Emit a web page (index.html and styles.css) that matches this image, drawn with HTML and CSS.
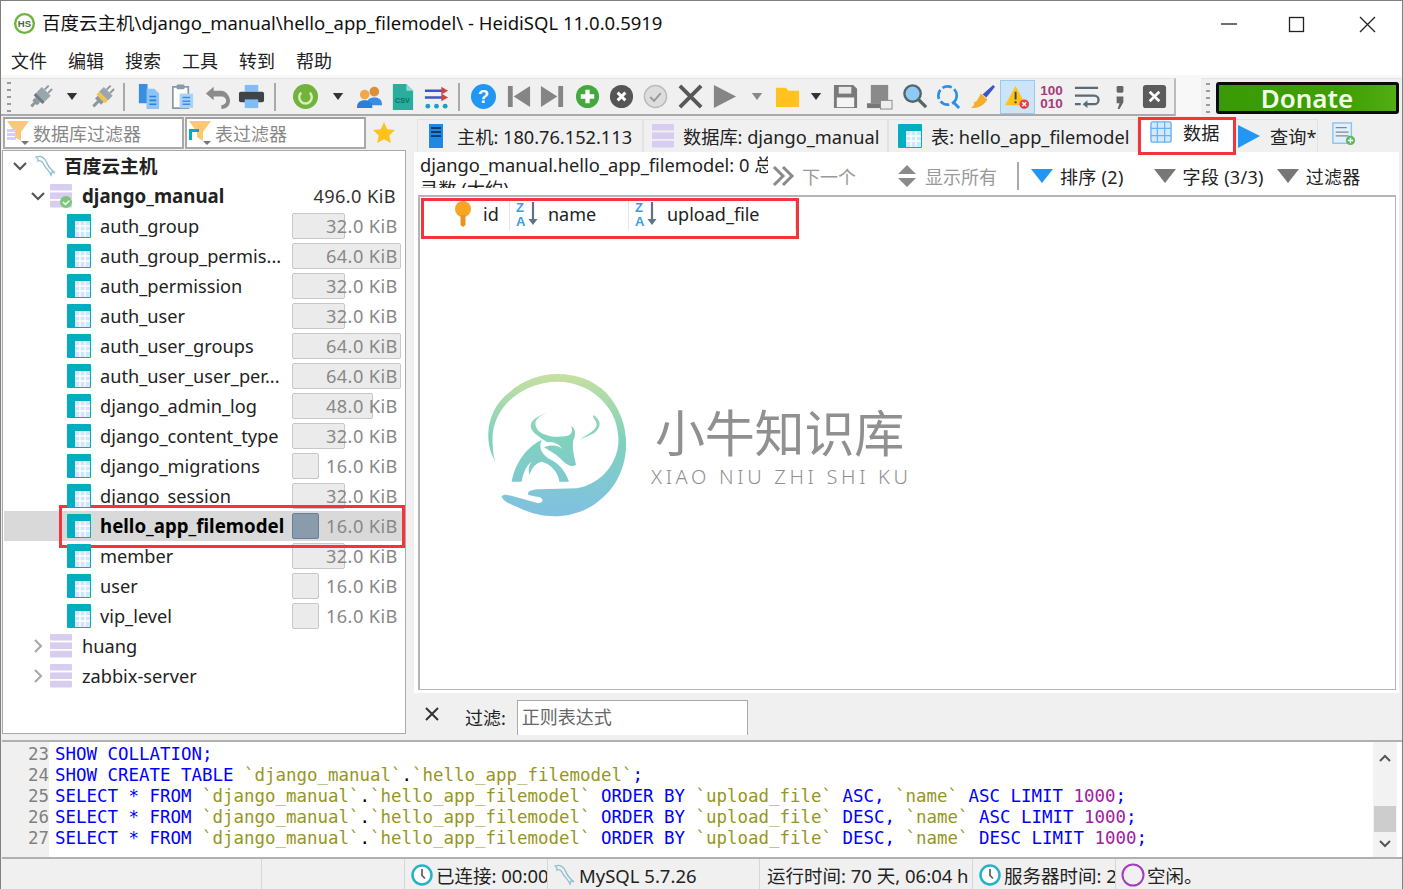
FILE: index.html
```html
<!DOCTYPE html>
<html lang="zh">
<head>
<meta charset="utf-8">
<title>HeidiSQL</title>
<link rel="stylesheet" href="styles.css">
</head>
<body>
<svg class="sprite" width="0" height="0">
  <defs>
    <symbol id="tbl" viewBox="0 0 24 24"><rect width="24" height="24" rx="1" fill="#00aebf"/><rect x="8" y="7" width="15" height="16" fill="#cfe6fb"/><path d="M13 7v16M18 7v16M8 12h15M8 17h15" stroke="#fff" stroke-width="1.3"/></symbol>
    <symbol id="db" viewBox="0 0 22 24"><rect width="22" height="6.6" rx="1" fill="#d8cdee"/><rect y="8.4" width="22" height="6.6" fill="#d8cdee"/><rect y="16.8" width="22" height="6.6" rx="1" fill="#d8cdee"/></symbol>
    <symbol id="sort" viewBox="0 0 24 26"><text x="0" y="11" class="az">Z</text><text x="0" y="25" class="az">A</text><path d="M17 1v20" stroke="#5f7488" stroke-width="2.200"/><path d="M12.500 18h9l-4.500 6z" fill="#5f7488"/></symbol>
    <symbol id="dolphin" viewBox="0 0 24 24"><path d="M2 3c5-2 9 1 11 6 1 4 4 6 8 10l-3-1-1 3c-2-5-5-6-7-10C8 7 6 6 4 7 5 5 3 4 2 3z" fill="none" stroke="#8fbfd0" stroke-width="1.300"/></symbol>
    <symbol id="clock" viewBox="0 0 24 24"><circle cx="12" cy="12" r="9.500" fill="#fff" stroke="#28b2c6" stroke-width="2.500"/><path d="M12 6v6.500l3 3" fill="none" stroke="#555" stroke-width="1.600"/></symbol>
    <symbol id="funnel" viewBox="0 0 24 26"><path d="M1 1h22l-8 11v9l-6-4v-5z" fill="#fbc778"/></symbol>
    <symbol id="caret" viewBox="0 0 14 8"><path d="M1 0h12l-6 8z"/></symbol>
    <symbol id="plug" viewBox="0 0 28 28"><g transform="rotate(45 14 14)"><path d="M11 0h2v6h-2zM16 0h2v6h-2z" fill="#8c979e"/><path d="M8 6h13v7a6 6 0 0 1-13 0z" fill="#9aa6ad"/><rect x="8" y="15" width="13" height="3" fill="#6e7b83"/><path d="M11 19h7v4h-2v5h-3v-5h-2z" fill="#8c979e"/></g></symbol>
  </defs>
</svg>

<div class="window">
  <header class="titlebar">
    <svg class="hs" viewBox="0 0 24 24"><circle cx="12" cy="12" r="11" fill="#6fb23c"/><circle cx="12" cy="12" r="8.500" fill="#fff"/><text x="12" y="15.500" class="hs-t">HS</text></svg>
    <span class="title">百度云主机\django_manual\hello_app_filemodel\ - HeidiSQL 11.0.0.5919</span>
    <div class="winctl">
      <svg viewBox="0 0 69 44"><path d="M26 23h16" stroke="#222" stroke-width="1.300"/></svg>
      <svg viewBox="0 0 69 44"><rect x="25.500" y="16.500" width="14" height="14" fill="none" stroke="#222" stroke-width="1.300"/></svg>
      <svg viewBox="0 0 69 44"><path d="M27 16l15 15M42 16L27 31" stroke="#222" stroke-width="1.300"/></svg>
    </div>
  </header>

  <nav class="menubar"><span>文件</span><span>编辑</span><span>搜索</span><span>工具</span><span>转到</span><span>帮助</span></nav>

  <div class="toolrow">
    <div class="toolbar">
      <i class="grip"></i>
      <span class="b"><svg viewBox="0 0 28 28"><use href="#plug"/></svg></span>
      <span class="c"><svg class="car" viewBox="0 0 14 8"><use href="#caret"/></svg></span>
      <span class="b n"><svg viewBox="0 0 28 28"><g transform="rotate(45 14 14)"><path d="M11 0h2v6h-2zM16 0h2v6h-2z" fill="#8c979e"/><path d="M8 6h13v7H8z" fill="#9aa6ad"/><rect x="8" y="13" width="13" height="4" fill="#f5c445"/><path d="M10 17h9v4h-3v7h-3v-7h-3z" fill="#8c979e"/></g></svg></span>
      <i class="sep"></i>
      <span class="b"><svg viewBox="0 0 28 28"><path d="M4 1h9v20H4z" fill="#3a8de0"/><path d="M12 6h8l5 5v16H12z" fill="#8cc4f5"/><path d="M15 14h7M15 18h7M15 22h7" stroke="#2f7fd0" stroke-width="1.600"/></svg></span>
      <span class="b"><svg viewBox="0 0 28 28"><path d="M4 4h16v22H4z" fill="#fff" stroke="#8a99a5" stroke-width="1.800"/><rect x="8" y="1.500" width="8" height="5" rx="1" fill="#8a99a5"/><path d="M11 11h14v15H11z" fill="#a9d2f7"/><path d="M14 15h8M14 19h8M14 22h8" stroke="#3a8de0" stroke-width="1.500"/></svg></span>
      <span class="b"><svg viewBox="0 0 28 28"><path d="M10 4L2 11l8 7v-4h8c3 0 5 2 5 4.500S21 23 18 23v4c6 0 9-4 9-8.500S23 8 18 8h-8z" fill="#8b8b8b"/></svg></span>
      <span class="b"><svg viewBox="0 0 28 28"><rect x="7" y="2" width="14" height="7" fill="#7fbdf2"/><rect x="1" y="9" width="26" height="11" rx="2" fill="#3e4449"/><rect x="7" y="17" width="14" height="9" fill="#7fbdf2"/></svg></span>
      <i class="sep wide"></i>
      <span class="b"><svg viewBox="0 0 28 28"><circle cx="14" cy="14" r="13" fill="#71b33c"/><path d="M9.500 10a6.500 6.500 0 1 0 9 0" fill="none" stroke="#d9efb9" stroke-width="2.500"/></svg></span>
      <span class="c w"><svg class="car" viewBox="0 0 14 8"><use href="#caret"/></svg></span>
      <span class="b n"><svg viewBox="0 0 28 28"><circle cx="19" cy="9" r="5" fill="#d9913a"/><path d="M11 23c0-6 3-8 8-8s8 2 8 8z" fill="#3a8de0"/><circle cx="9" cy="12" r="5" fill="#f0a94a"/><path d="M1 26c0-6 3-8 8-8s8 2 8 8z" fill="#2b7fd6"/></svg></span>
      <span class="b csvb"><svg viewBox="0 0 28 28"><path d="M4 1h14l7 7v20H4z" fill="#27ae9c"/><path d="M18 1l7 7h-7z" fill="#8edcd1"/><text x="14" y="21" class="csv">CSV</text></svg></span>
      <span class="b"><svg viewBox="0 0 28 28"><path d="M2 8h19M2 15h19" stroke="#3b57c4" stroke-width="2.500"/><path d="M19 4l7 4-7 4zM19 11l7 4-7 4z" fill="#d0453e"/><circle cx="5" cy="24" r="2.500" fill="#17a2c5"/><circle cx="14" cy="24" r="2.500" fill="#17a2c5"/><circle cx="23" cy="24" r="2.500" fill="#17a2c5"/></svg></span>
      <i class="sep tight"></i>
      <span class="b"><svg viewBox="0 0 28 28"><circle cx="14" cy="14" r="13" fill="#2196f3"/><text x="14" y="21" class="q">?</text></svg></span>
      <span class="b"><svg viewBox="0 0 28 28"><path d="M3 3h5v22H3zM26 3v22L9 14z" fill="#858585"/></svg></span>
      <span class="b"><svg viewBox="0 0 28 28"><path d="M25 3h-5v22h5zM2 3v22l17-11z" fill="#858585"/></svg></span>
      <span class="b"><svg viewBox="0 0 28 28"><circle cx="14" cy="14" r="12" fill="#43a93f"/><path d="M14 7v14M7 14h14" stroke="#fff" stroke-width="4.500"/></svg></span>
      <span class="b"><svg viewBox="0 0 28 28"><circle cx="14" cy="14" r="12" fill="#555"/><path d="M10 10l8 8M18 10l-8 8" stroke="#fff" stroke-width="3"/></svg></span>
      <span class="b"><svg viewBox="0 0 28 28"><circle cx="14" cy="14" r="11.500" fill="#ddd" stroke="#bbb" stroke-width="1.500"/><path d="M8.500 14.500l4 4 7-8" fill="none" stroke="#999" stroke-width="2"/></svg></span>
      <span class="b"><svg viewBox="0 0 28 28"><path d="M3 3l22 22M25 3L3 25" stroke="#585858" stroke-width="4"/></svg></span>
      <span class="b"><svg viewBox="0 0 28 28"><path d="M3 2l23 12L3 26z" fill="#858585"/></svg></span>
      <span class="c s m"><svg class="car g" viewBox="0 0 14 8"><use href="#caret"/></svg></span>
      <span class="b"><svg viewBox="0 0 28 28"><path d="M2 5h10l3 3h11v17H2z" fill="#ffc21e"/></svg></span>
      <span class="c s"><svg class="car" viewBox="0 0 14 8"><use href="#caret"/></svg></span>
      <span class="b"><svg viewBox="0 0 28 28"><path d="M2 2h20l4 4v20H2z" fill="#7a7a7a"/><rect x="7" y="4" width="13" height="7" fill="#e8e8e8"/><rect x="5" y="15" width="18" height="10" fill="#f4f4f4"/></svg></span>
      <span class="b"><svg viewBox="0 0 28 28"><path d="M5 2h18v19H5z" fill="#8a8a8a"/><path d="M1 21h18v5H1z" fill="#777"/><rect x="15" y="18" width="12" height="9" fill="#eee" stroke="#888"/></svg></span>
      <span class="b"><svg viewBox="0 0 28 28"><circle cx="12" cy="11" r="8.500" fill="#8fc9f7" stroke="#566" stroke-width="2.500"/><path d="M18 17l8 8" stroke="#566" stroke-width="3.500"/></svg></span>
      <span class="b"><svg viewBox="0 0 28 28"><circle cx="13" cy="13" r="9.500" fill="none" stroke="#2b8fe8" stroke-width="2.800" stroke-dasharray="10 3"/><path d="M19 20l6 6" stroke="#2b8fe8" stroke-width="3"/></svg></span>
      <span class="b"><svg viewBox="0 0 28 28"><path d="M25 2l2 2-9 11-4-3z" fill="#3b57c4"/><path d="M12 11l7 6c-3 6-9 9-17 9 3-2 4-4 3-6 3 0 5-4 7-9z" fill="#f6ad2b"/></svg></span>
      <span class="b on"><svg viewBox="0 0 28 28"><path d="M12 3l11 20H1z" fill="#ffc21e"/><path d="M12 9v8M12 19v2" stroke="#444" stroke-width="2"/><circle cx="21" cy="22" r="5" fill="#e8434a"/><path d="M19 20l4 4M23 20l-4 4" stroke="#fff" stroke-width="1.400"/></svg></span>
      <span class="b"><svg viewBox="0 0 28 28"><text x="14" y="12" class="bin">100</text><text x="14" y="26" class="bin">010</text></svg></span>
      <span class="b"><svg viewBox="0 0 28 28"><path d="M2 5h24M2 13h20a4 4 0 0 1 0 9H13M2 22h6" fill="none" stroke="#5a6a76" stroke-width="2.400"/><path d="M15 18l-5 4 5 4z" fill="#5a6a76"/></svg></span>
      <span class="b"><svg viewBox="0 0 28 28"><rect x="10" y="3" width="7" height="7" rx="1.500" fill="#666"/><path d="M10 14h7v6l-4 7h-2l2-6h-3z" fill="#666"/></svg></span>
      <span class="b"><svg viewBox="0 0 28 28"><rect x="2" y="2" width="24" height="24" rx="3" fill="#5b5b5b"/><path d="M9 9l10 10M19 9L9 19" stroke="#fff" stroke-width="2.800"/></svg></span>
    </div>
    <div class="donatebar">
      <i class="grip"></i>
      <div class="donate">Donate</div>
    </div>
  </div>

  <main class="main">
    <section class="left">
      <div class="filters">
        <div class="filter"><svg class="fi" viewBox="0 0 24 26"><use href="#funnel"/><rect x="1" y="9" width="9" height="3" fill="#d8cdee"/><rect x="1" y="13" width="9" height="3" fill="#d8cdee"/><rect x="1" y="17" width="9" height="3" fill="#d8cdee"/><path d="M15 21h8l-4 4z" fill="#777"/></svg>数据库过滤器</div>
        <div class="filter"><svg class="fi" viewBox="0 0 24 26"><use href="#funnel"/><path d="M1 9h10v3H4v8H1z" fill="#00aebf"/><path d="M15 21h8l-4 4z" fill="#777"/></svg>表过滤器</div>
        <svg class="star" viewBox="0 0 24 24"><path d="M12 1l3.300 7.200 7.700.9-5.700 5.300 1.500 7.700L12 18.300 5.200 22.100l1.500-7.700L1 9.100l7.700-.9z" fill="#ffc21e"/></svg>
      </div>
      <div class="tree">
        <div class="row host"><svg class="chev" viewBox="0 0 14 14"><path d="M1 4l6 6 6-6"/></svg><svg class="ic-host" viewBox="0 0 24 24"><use href="#dolphin"/></svg><b>百度云主机</b></div>
        <div class="row dbrow"><svg class="chev" viewBox="0 0 14 14"><path d="M1 4l6 6 6-6"/></svg><svg class="ic-db" viewBox="0 0 22 24"><use href="#db"/><circle cx="16" cy="18" r="6" fill="#7bc77b"/><path d="M13 18l2.500 2.500 4-4" fill="none" stroke="#fff" stroke-width="1.400"/></svg><b class="name">django_manual</b><span class="size dark">496.0 KiB</span></div>
        <div class="row trow"><svg class="ic-t"><use href="#tbl"/></svg><span class="name">auth_group</span><span class="size"><i class="bar" style="width:53px"></i>32.0 KiB</span></div>
        <div class="row trow"><svg class="ic-t"><use href="#tbl"/></svg><span class="name">auth_group_permis...</span><span class="size"><i class="bar" style="width:109px"></i>64.0 KiB</span></div>
        <div class="row trow"><svg class="ic-t"><use href="#tbl"/></svg><span class="name">auth_permission</span><span class="size"><i class="bar" style="width:53px"></i>32.0 KiB</span></div>
        <div class="row trow"><svg class="ic-t"><use href="#tbl"/></svg><span class="name">auth_user</span><span class="size"><i class="bar" style="width:53px"></i>32.0 KiB</span></div>
        <div class="row trow"><svg class="ic-t"><use href="#tbl"/></svg><span class="name">auth_user_groups</span><span class="size"><i class="bar" style="width:109px"></i>64.0 KiB</span></div>
        <div class="row trow"><svg class="ic-t"><use href="#tbl"/></svg><span class="name">auth_user_user_per...</span><span class="size"><i class="bar" style="width:109px"></i>64.0 KiB</span></div>
        <div class="row trow"><svg class="ic-t"><use href="#tbl"/></svg><span class="name">django_admin_log</span><span class="size"><i class="bar" style="width:81px"></i>48.0 KiB</span></div>
        <div class="row trow"><svg class="ic-t"><use href="#tbl"/></svg><span class="name">django_content_type</span><span class="size"><i class="bar" style="width:53px"></i>32.0 KiB</span></div>
        <div class="row trow"><svg class="ic-t"><use href="#tbl"/></svg><span class="name">django_migrations</span><span class="size"><i class="bar" style="width:27px"></i>16.0 KiB</span></div>
        <div class="row trow"><svg class="ic-t"><use href="#tbl"/></svg><span class="name">django_session</span><span class="size"><i class="bar" style="width:53px"></i>32.0 KiB</span></div>
        <div class="row trow sel"><svg class="ic-t"><use href="#tbl"/></svg><b class="name">hello_app_filemodel</b><span class="size"><i class="bar" style="width:27px"></i>16.0 KiB</span></div>
        <div class="row trow"><svg class="ic-t"><use href="#tbl"/></svg><span class="name">member</span><span class="size"><i class="bar" style="width:53px"></i>32.0 KiB</span></div>
        <div class="row trow"><svg class="ic-t"><use href="#tbl"/></svg><span class="name">user</span><span class="size"><i class="bar" style="width:27px"></i>16.0 KiB</span></div>
        <div class="row trow"><svg class="ic-t"><use href="#tbl"/></svg><span class="name">vip_level</span><span class="size"><i class="bar" style="width:27px"></i>16.0 KiB</span></div>
        <div class="row dbrow"><svg class="chev closed" viewBox="0 0 14 14"><path d="M4 1l6 6-6 6"/></svg><svg class="ic-db" viewBox="0 0 22 24"><use href="#db"/></svg><span class="name">huang</span></div>
        <div class="row dbrow"><svg class="chev closed" viewBox="0 0 14 14"><path d="M4 1l6 6-6 6"/></svg><svg class="ic-db" viewBox="0 0 22 24"><use href="#db"/></svg><span class="name">zabbix-server</span></div>
      </div>
    </section>

    <section class="right">
      <div class="tabs">
        <div class="tab t1"><svg class="tab-ic" viewBox="0 0 24 24"><rect x="5" y="0" width="14" height="24" fill="#1e88e5"/><path d="M7 4h10M7 8h10M7 12h10" stroke="#0d3c66" stroke-width="2"/></svg>主机: 180.76.152.113</div>
        <div class="tab t2"><svg class="tab-ic" viewBox="0 0 22 24"><use href="#db"/></svg>数据库: django_manual</div>
        <div class="tab t3"><svg class="tab-ic" viewBox="0 0 24 24"><use href="#tbl"/></svg>表: hello_app_filemodel</div>
        <div class="tab t4"><svg class="tab-ic" viewBox="0 0 24 24"><rect x="1" y="1" width="22" height="22" rx="2" fill="#d4e9fc" stroke="#66b2f2" stroke-width="1.500"/><path d="M8 1v22M16 1v22M1 8h22M1 16h22" stroke="#66b2f2" stroke-width="1.300"/></svg>数据</div>
        <div class="tab t5"><svg class="tab-ic" viewBox="0 0 24 24"><path d="M1 1l22 11L1 24z" fill="#2196f3"/></svg>查询*</div>
        <div class="tab t6"><svg class="tab-ic" viewBox="0 0 26 26"><rect x="1" y="1" width="20" height="22" fill="#e3f0fc" stroke="#8cc0ee" stroke-width="1.500"/><path d="M4 6h12M4 11h14M4 15h14" stroke="#7a8a96" stroke-width="1.300"/><circle cx="20" cy="20" r="5" fill="#5cb85c"/><path d="M20 17v6M17 20h6" stroke="#fff" stroke-width="1.500"/></svg></div>
      </div>
      <div class="page">
        <div class="gridnav">
          <div class="info">django_manual.hello_app_filemodel: 0 总<br>录数 (大约)</div>
          <div class="nv nv-next"><svg class="chevs" viewBox="0 0 24 24"><path d="M3 3l9 9-9 9M12 3l9 9-9 9" fill="none" stroke="#8a8a8a" stroke-width="3"/></svg><span class="mut">下一个</span></div>
          <div class="nv nv-all"><svg class="upd" viewBox="0 0 20 24"><path d="M10 1l9 9H1zM1 14h18l-9 9z" fill="#8a8a8a"/></svg><span class="mut">显示所有</span></div>
          <i class="navsep"></i>
          <div class="nv nv-sort"><svg class="tri" viewBox="0 0 22 14"><path d="M0 0h22L11 14z" fill="#2196f3"/></svg>排序 (2)</div>
          <div class="nv nv-cols"><svg class="tri" viewBox="0 0 22 14"><path d="M0 0h22L11 14z" fill="#777"/></svg>字段 (3/3)</div>
          <div class="nv nv-filter"><svg class="tri" viewBox="0 0 22 14"><path d="M0 0h22L11 14z" fill="#777"/></svg>过滤器</div>
        </div>
        <div class="grid">
          <div class="ghead">
            <div class="gc g-id"><svg class="key" viewBox="0 0 18 26"><circle cx="9" cy="8" r="8" fill="#f5a623"/><path d="M6.500 14h5v10l-2.500 2-2.500-2z" fill="#e8951a"/></svg>id</div>
            <div class="gc g-name"><svg class="sorti"><use href="#sort"/></svg>name</div>
            <div class="gc g-file"><svg class="sorti"><use href="#sort"/></svg>upload_file</div>
          </div>
        </div>
      </div>
      <div class="filterbar">
        <svg class="xs" viewBox="0 0 14 14"><path d="M1 1l12 12M13 1L1 13" stroke="#333" stroke-width="2"/></svg>
        <span class="fl">过滤:</span>
        <div class="regex">正则表达式</div>
      </div>
    </section>
  </main>

  <section class="log">
    <div class="gutter"><div>23</div><div>24</div><div>25</div><div>26</div><div>27</div></div>
    <div class="code">
      <div><span class="k">SHOW COLLATION;</span></div>
      <div><span class="k">SHOW CREATE TABLE</span> <span class="s">`django_manual`</span>.<span class="s">`hello_app_filemodel`</span><span class="k">;</span></div>
      <div><span class="k">SELECT * FROM</span> <span class="s">`django_manual`</span>.<span class="s">`hello_app_filemodel`</span> <span class="k">ORDER BY</span> <span class="s">`upload_file`</span> <span class="k">ASC,</span> <span class="s">`name`</span> <span class="k">ASC LIMIT</span> <span class="m">1000</span><span class="k">;</span></div>
      <div><span class="k">SELECT * FROM</span> <span class="s">`django_manual`</span>.<span class="s">`hello_app_filemodel`</span> <span class="k">ORDER BY</span> <span class="s">`upload_file`</span> <span class="k">DESC,</span> <span class="s">`name`</span> <span class="k">ASC LIMIT</span> <span class="m">1000</span><span class="k">;</span></div>
      <div><span class="k">SELECT * FROM</span> <span class="s">`django_manual`</span>.<span class="s">`hello_app_filemodel`</span> <span class="k">ORDER BY</span> <span class="s">`upload_file`</span> <span class="k">DESC,</span> <span class="s">`name`</span> <span class="k">DESC LIMIT</span> <span class="m">1000</span><span class="k">;</span></div>
    </div>
    <div class="vscroll">
      <svg viewBox="0 0 14 10"><path d="M2 8l5-5 5 5" fill="none" stroke="#555" stroke-width="2"/></svg>
      <i class="thumb"></i>
      <svg viewBox="0 0 14 10"><path d="M2 2l5 5 5-5" fill="none" stroke="#555" stroke-width="2"/></svg>
    </div>
  </section>

  <footer class="status">
    <div class="st"></div>
    <div class="st"></div>
    <div class="st"><svg class="st-ic"><use href="#clock"/></svg>已连接: 00:00</div>
    <div class="st"><svg class="st-ic"><use href="#dolphin"/></svg>MySQL 5.7.26</div>
    <div class="st pad">运行时间: 70 天, 06:04 h</div>
    <div class="st"><svg class="st-ic"><use href="#clock"/></svg>服务器时间: 2</div>
    <div class="st last"><svg class="st-ic"><circle cx="12" cy="12" r="10.500" fill="none" stroke="#a43cc0" stroke-width="2"/></svg>空闲。</div>
  </footer>

  <div class="mark">
    <svg class="logo" viewBox="0 0 480 510">
      <defs><linearGradient id="lg" gradientUnits="userSpaceOnUse" x1="0" y1="40" x2="0" y2="470"><stop offset="0" stop-color="#c8e0a0"/><stop offset=".45" stop-color="#80d2bd"/><stop offset="1" stop-color="#80c0e2"/></linearGradient></defs>
      <path fill="url(#lg)" d="M78 308C40 250 45 150 120 95 200 22 340 25 410 100c90 100 70 250-20 320-70 60-170 60-240 25-20-8-50-20-55-35 5-10 20-5 40 0l70 20c20-2 15-20-5-20l-25-5c-5-10 10-17 35-17l110-3c80-15 130-85 125-155-5-100-95-165-180-165C150 65 60 150 68 250c0 25 4 45 10 58z"/>
      <path fill="url(#lg)" d="M245 155c-35 7-55 25-47 45 7 25 52 35 92 28 15-3 20-18 13-31 15 8 15 28 7 43-5 30 5 55 8 75-18 10-33-5-48-20-15-15-35-25-48-33 20-10 45-5 55 5-8-15-30-25-45-20-20-15-50-30-50-50 0-20 30-35 63-42z"/>
      <path fill="url(#lg)" d="M215 240c-45 20-80 70-90 125h30c5-30 15-50 30-60-10 15-10 25-7 40 7-20 17-35 37-40 25 5 50 30 53 60h29c-12-35-32-55-62-70-20-15-30-30-20-55z"/>
      <path fill="url(#lg)" d="M370 165c15 10 25 25 15 40-10 20-40 25-60 35 25-15 50-25 55-45 0-15-15-20-10-30z"/>
    </svg>
    <div class="marktext">
      <div class="cn">小牛知识库</div>
      <div class="en">XIAO NIU ZHI SHI KU</div>
    </div>
  </div>

  <i class="redbox rb-tab"></i>
  <i class="redbox rb-head"></i>
  <i class="redbox rb-row"></i>
</div>
</body>
</html>
```
FILE: styles.css
```css
* { box-sizing: border-box; }
html, body { margin: 0; padding: 0; }
body {
  width: 1403px; height: 889px; overflow: hidden;
  font-family: "Noto Sans", "Open Sans", "Noto Sans CJK SC", sans-serif;
  font-size: 18px; color: #222; background: #f0f0f0;
}
.sprite { position: absolute; }
i { display: block; font-style: normal; }
svg { display: block; flex: none; }
.window {
  position: relative; width: 1403px; height: 889px;
  display: flex; flex-direction: column;
  border: 1px solid #808080; border-bottom: 0; background: #f0f0f0; overflow: hidden;
}

/* title + menu */
.titlebar { height: 44px; flex: none; background: #fff; display: flex; align-items: center; padding-left: 12px; }
.hs { width: 23px; height: 23px; margin-right: 6px; }
.hs-t { font: bold 10px "Liberation Sans", sans-serif; text-anchor: middle; fill: #4a6a3a; }
.title { font-size: 18.500px; line-height: 1; white-space: nowrap; color: #111; }
.winctl { margin-left: auto; display: flex; }
.winctl svg { width: 69px; height: 44px; }
.menubar { height: 30px; flex: none; background: #fff; display: flex; gap: 21px; padding: 0 0 0 10px; align-items: center; font-size: 18px; color: #222; }

/* toolbar */
.toolrow { height: 41px; flex: none; display: flex; align-items: stretch; padding-top: 3px; background: #f8f8f8; }
.toolbar { width: 1175px; display: flex; align-items: center; background: #f0f0f0; border-bottom: 2px solid #a9a9a9; border-right: 2px solid #bbb; border-top: 1px solid #e4e4e4; }
.grip { width: 4px; height: 30px; margin: 0 12px 0 6px; background: repeating-linear-gradient(#9a9a9a 0 2px, transparent 2px 7px); }
.b { width: 34.400px; height: 34px; flex: none; display: flex; align-items: center; justify-content: center; }
.b svg { width: 27px; height: 27px; }
.b.n { width: 30px; }
.b.csvb { margin-left: 1px; }
.b.on { background: #cce4f7; border: 1px solid #99c9ef; }
.c { width: 30px; flex: none; display: flex; justify-content: center; }
.c.w { width: 32px; }
.c.s { width: 24px; }
.c.m { margin-left: 2px; width: 26px; }
.car { width: 12px; height: 7px; fill: #333; }
.car.g { fill: #888; }
.sep { width: 2px; height: 28px; background: #aaa; margin: 0 6px; flex: none; }
.sep.wide { margin: 0 12px 0 5px; }
.sep.tight { margin: 0 6.600px 0 4px; }
.az { font: bold 13px "Liberation Sans", sans-serif; fill: #3a9be8; }
.csv { font: bold 7.500px "Liberation Sans", sans-serif; text-anchor: middle; fill: #0e6e60; }
.q { font: bold 19px "Liberation Sans", sans-serif; text-anchor: middle; fill: #fff; }
.bin { font: bold 14px "Liberation Sans", sans-serif; text-anchor: middle; fill: #a63a7a; }
.donatebar { margin-left: 25px; flex: 1; display: flex; align-items: center; background: #f0f0f0; border-top: 1px solid #e4e4e4; padding-right: 3px; }
.donatebar .grip { margin: 0 6px 0 5px; }
.donate {
  flex: 1; height: 32px; border: 3px solid #0b0b0b; border-radius: 3px;
  background: linear-gradient(90deg, #3a9a05, #3f9f02 70%, #52ad12);
  color: #f2fbe8; font-size: 26px; font-weight: 600; line-height: 26px; text-align: center; padding-right: 1px;
}

/* main */
.main { height: 624px; flex: none; display: flex; }
.left { width: 405px; flex: none; display: flex; flex-direction: column; }
.filters { height: 34px; flex: none; display: flex; align-items: flex-start; padding: 1px 0 0 2px; gap: 1px; }
.filter { width: 181px; height: 32px; background: #fff; border: 2px solid #a9a9a9; border-top-color: #a0a0a0; display: flex; align-items: center; font-size: 18px; color: #888; white-space: nowrap; }
.fi { width: 24px; height: 26px; margin: 0 3px 0 1px; }
.star { width: 24px; height: 24px; margin: 4px 0 0 5px; }
.tree { width: 404px; height: 584px; margin-left: 1px; background: #fff; border: 1px solid #aaa; flex: none; font-size: 18.200px; }
.row { height: 30px; display: flex; align-items: center; position: relative; white-space: nowrap; }
.row b { font-size: 18.700px; margin-top: -2px; }
.host b { margin-top: -4px; }
.row b, .row .name { position: relative; }
.chev { width: 14px; height: 14px; fill: none; stroke: #555; stroke-width: 2.200; }
.chev.closed { stroke: #aaa; }
.host { padding-left: 10px; }
.ic-host { width: 24px; height: 24px; margin: 0 6px 0 7px; }
.dbrow { padding-left: 28px; }
.ic-db { width: 22px; height: 24px; margin: 0 10px 0 5px; }
.trow { padding-left: 64px; }
.ic-t { width: 24px; height: 24px; margin-right: 9px; position: relative; z-index: 1; }
.size { margin-left: auto; margin-right: 9px; color: #888; position: relative; z-index: 0; letter-spacing: .4px; }
.size.dark { color: #333; }
.bar { position: absolute; left: -34px; top: -1px; height: 26px; background: #ebebeb; border: 1px solid #c8c8c8; border-radius: 2px; z-index: -1; }
.trow .size { width: 70px; text-align: right; }
.sel { background: #d9d9d9; margin-left: 1px; padding-left: 63px; }
.sel .name { color: #000; }
.sel .bar { background: #8a9bac; border-color: #66809a; }

/* right side */
.right { flex: 1; min-width: 0; display: flex; flex-direction: column; padding-left: 8px; position: relative; }
.tabs { height: 36px; flex: none; display: flex; align-items: flex-end; padding: 0 0 0 3px; }
.tab { height: 33px; display: flex; align-items: center; white-space: nowrap; background: #f0f0f0; border: 1px solid #e2e2e2; border-bottom: 0; font-size: 18.200px; flex: none; padding-bottom: 1px; }
.tab-ic { width: 24px; height: 24px; margin: 0 8px 0 7px; }
.t1 { width: 226px; padding-left: 1px; }
.t1 .tab-ic { margin: 0 9px 0 5px; }
.t2 { width: 245px; }
.t3 { width: 250px; }
.t3 .tab-ic { margin: 0 9px 0 9px; }
.t4 { width: 93px; height: 34px; background: #fff; margin-left: 3px; padding-bottom: 6px; padding-left: 1px; border: 0; }
.t4 .tab-ic { margin: 0 11px 0 8px; width: 22px; height: 22px; }
.t5 { width: 84px; }
.t5 .tab-ic { margin: 0 9px 0 2px; }
.t6 { background: transparent; border: 0; margin-left: 14px; padding-bottom: 4px; }
.t6 .tab-ic { margin: 0; }
.page { height: 541px; flex: none; background: #fff; padding: 0 3px 3px 4px; display: flex; flex-direction: column; margin-right: 3px; }
.gridnav { height: 43px; flex: none; display: flex; align-items: center; padding-top: 5px; font-size: 18px; }
.info { width: 350px; height: 35px; align-self: flex-start; margin-top: -4px; overflow: hidden; font-size: 18.300px; line-height: 24px; white-space: nowrap; flex: none; padding-left: 2px; }
.nv { display: flex; align-items: center; white-space: nowrap; flex: none; margin-top: -1px; letter-spacing: .3px; }
.mut { color: #999; letter-spacing: 0; }
.chevs { width: 24px; height: 24px; margin: 0 7px 0 3px; }
.upd { width: 20px; height: 24px; margin-right: 8px; }
.tri { width: 22px; height: 14px; margin-right: 7px; }
.nv-next { margin-left: 0; }
.nv-all { margin-left: 41px; }
.navsep { width: 2px; height: 28px; background: #aaa; margin: 0 0 0 20px; flex: none; }
.nv-sort { margin-left: 12px; }
.nv-cols { margin-left: 30px; }
.nv-filter { margin-left: 13px; }
.grid { flex: 1; border: 2px solid #b5b5b5; border-right-width: 1px; border-bottom-width: 1px; background: #fff; }
.ghead { display: flex; height: 34px; align-items: center; font-size: 18px; }
.gc { display: flex; align-items: center; height: 32px; border-right: 1px solid #e4e4e4; white-space: nowrap; }
.g-id { width: 90px; padding-left: 34px; }
.g-name { width: 119px; padding-left: 6px; }
.g-file { width: 167px; padding-left: 6px; }
.key { width: 18px; height: 26px; margin-right: 11px; }
.sorti { width: 24px; height: 26px; margin-right: 8px; }
.filterbar { flex: 1; display: flex; align-items: center; padding: 0 0 0 11px; }
.xs { width: 14px; height: 14px; margin: -6px 26px 0 0; }
.fl { font-size: 18px; margin-right: 11px; }
.regex { width: 231px; height: 35px; background: #fff; border: 1px solid #aaa; border-bottom: 0; font-size: 18px; line-height: 32px; padding-left: 4px; color: #666; margin-top: 1px; }

/* log */
.log { height: 119px; flex: none; margin: 0 0 0 1px; display: flex; background: #fff; border-top: 2px solid #b0b0b0; border-bottom: 2px solid #b0b0b0; font-family: "DejaVu Sans Mono", monospace; font-size: 17.450px; line-height: 21px; }
.gutter { width: 47px; flex: none; background: #f0f0f0; text-align: right; color: #808080; padding-top: 2px; }
.code { flex: 1; padding: 2px 0 0 6px; color: #000; }
.code div { white-space: pre; }
.k { color: #0000ff; }
.s { color: #96961e; }
.m { color: #a020a0; }
.vscroll { width: 24px; flex: none; background: #f2f2f2; display: flex; flex-direction: column; align-items: center; padding: 11px 0 8px; margin-right: 5px; }
.vscroll svg { width: 14px; height: 10px; }
.thumb { width: 22px; height: 26px; background: #cdcdcd; margin: auto 0 7px; }

/* status */
.status { flex: 1; display: grid; grid-template-columns: 261px 143px 143px 212px 213px 143px 1fr; background: #f0f0f0; font-size: 18.500px; white-space: nowrap; }
.st { display: flex; align-items: center; overflow: hidden; border-right: 1px solid #d6d6d6; padding: 2px 0 0 5px; }
.st.pad { padding-left: 7px; }
.st.last { border-right: 0; }
.st-ic { width: 24px; height: 24px; margin-right: 2px; }

/* overlays */
.mark { position: absolute; left: 469px; top: 359px; display: flex; pointer-events: none; }
.logo { width: 160px; height: 170px; }
.marktext { margin: 41px 0 0 25px; color: #909090; }
.cn { font-size: 50px; line-height: 58px; font-family: "Noto Sans CJK SC", sans-serif; font-weight: 400; letter-spacing: -.2px; white-space: nowrap; }
.en { font-family: "Noto Sans", sans-serif; font-weight: 300; font-size: 20px; line-height: 26px; letter-spacing: 3.700px; white-space: nowrap; margin: 5px 0 0 -4px; }
.redbox { position: absolute; border: 3px solid #f5333a; pointer-events: none; }
.rb-tab { left: 1137px; top: 116px; width: 98px; height: 38px; }
.rb-head { left: 420px; top: 197px; width: 378px; height: 41px; }
.rb-row { left: 58px; top: 504px; width: 346px; height: 43px; }
```
